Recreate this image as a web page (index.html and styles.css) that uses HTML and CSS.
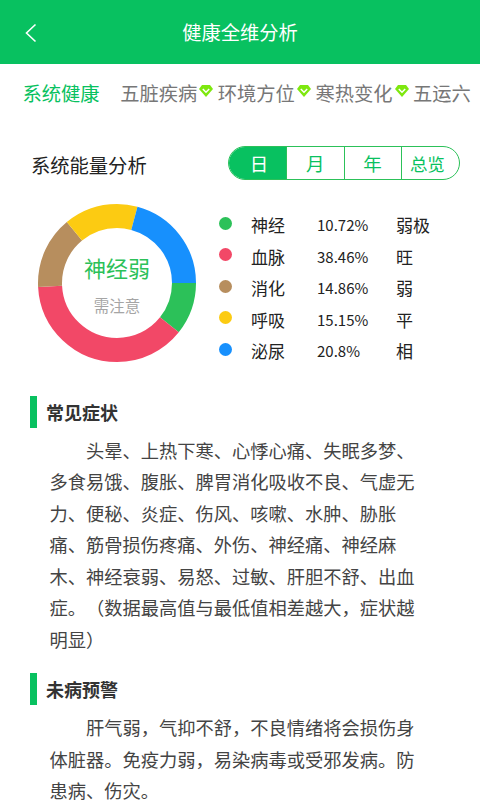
FILE: index.html
```html
<!DOCTYPE html>
<html lang="zh">
<head>
<meta charset="utf-8">
<title>健康全维分析</title>
<link rel="stylesheet" href="styles.css">
</head>
<body>
<header class="topbar">
  <svg class="back" width="14" height="20" viewBox="0 0 14 20"><path d="M11.5 1.5 L2.5 10 L11.5 18.5" fill="none" stroke="#fff" stroke-width="1.6"/></svg>
  <h1 class="title">健康全维分析</h1>
</header>
<nav class="tabs">
  <span class="tab active">系统健康</span>
  <span class="tab">五脏疾病</span>
  <svg class="gem" width="14" height="12" viewBox="0 0 14 12"><path d="M3 0 H11 L14 4 L7 12 L0 4 Z" fill="#7ee80f"/><path d="M3.8 4 L7 7.2 L10.2 4" fill="none" stroke="#fff" stroke-width="1.5"/></svg>
  <span class="tab">环境方位</span>
  <svg class="gem" width="14" height="12" viewBox="0 0 14 12"><path d="M3 0 H11 L14 4 L7 12 L0 4 Z" fill="#7ee80f"/><path d="M3.8 4 L7 7.2 L10.2 4" fill="none" stroke="#fff" stroke-width="1.5"/></svg>
  <span class="tab">寒热变化</span>
  <svg class="gem" width="14" height="12" viewBox="0 0 14 12"><path d="M3 0 H11 L14 4 L7 12 L0 4 Z" fill="#7ee80f"/><path d="M3.8 4 L7 7.2 L10.2 4" fill="none" stroke="#fff" stroke-width="1.5"/></svg>
  <span class="tab">五运六</span>
</nav>
<section class="energy-head">
  <h2 class="energy-title">系统能量分析</h2>
  <div class="segment">
    <span class="seg seg-on">日</span>
    <span class="seg">月</span>
    <span class="seg">年</span>
    <span class="seg seg-wide">总览</span>
  </div>
</section>
<section class="chart-row">
  <div class="donut">
    <svg width="160" height="160" viewBox="0 0 160 160">
      <g fill="none" stroke-width="24">
        <circle cx="80" cy="80" r="67" pathLength="100" stroke="#2cc159" stroke-dasharray="10.72 89.28" stroke-dashoffset="0"/>
        <circle cx="80" cy="80" r="67" pathLength="100" stroke="#f24867" stroke-dasharray="38.46 61.54" stroke-dashoffset="-10.72"/>
        <circle cx="80" cy="80" r="67" pathLength="100" stroke="#b78e5e" stroke-dasharray="14.86 85.14" stroke-dashoffset="-49.18"/>
        <circle cx="80" cy="80" r="67" pathLength="100" stroke="#fccb12" stroke-dasharray="15.15 84.85" stroke-dashoffset="-64.04"/>
        <circle cx="80" cy="80" r="67" pathLength="100" stroke="#1790fd" stroke-dasharray="20.81 79.19" stroke-dashoffset="-79.19"/>
      </g>
    </svg>
    <div class="donut-label">
      <div class="donut-main">神经弱</div>
      <div class="donut-sub">需注意</div>
    </div>
  </div>
  <ul class="legend">
    <li class="row"><i class="dot dot-green"></i><span class="name">神经</span><span class="pct">10.72%</span><span class="state">弱极</span></li>
    <li class="row"><i class="dot dot-red"></i><span class="name">血脉</span><span class="pct">38.46%</span><span class="state">旺</span></li>
    <li class="row"><i class="dot dot-brown"></i><span class="name">消化</span><span class="pct">14.86%</span><span class="state">弱</span></li>
    <li class="row"><i class="dot dot-yellow"></i><span class="name">呼吸</span><span class="pct">15.15%</span><span class="state">平</span></li>
    <li class="row"><i class="dot dot-blue"></i><span class="name">泌尿</span><span class="pct">20.8%</span><span class="state">相</span></li>
  </ul>
</section>
<section class="block block-first">
  <h3 class="block-title">常见症状</h3>
  <p class="block-text">头晕、上热下寒、心悸心痛、失眠多梦、多食易饿、腹胀、脾胃消化吸收不良、气虚无力、便秘、炎症、伤风、咳嗽、水肿、胁胀痛、筋骨损伤疼痛、外伤、神经痛、神经麻木、神经衰弱、易怒、过敏、肝胆不舒、出血症。（数据最高值与最低值相差越大，症状越明显）</p>
</section>
<section class="block block-second">
  <h3 class="block-title">未病预警</h3>
  <p class="block-text">肝气弱，气抑不舒，不良情绪将会损伤身体脏器。免疫力弱，易染病毒或受邪发病。防患病、伤灾。</p>
</section>
</body>
</html>
```
FILE: styles.css
```css
* { box-sizing: border-box; }
html, body { margin: 0; padding: 0; }
body {
  width: 480px;
  height: 800px;
  overflow: hidden;
  background: #fff;
  font-family: "Noto Sans CJK SC", "Noto Sans", sans-serif;
  color: #333;
}
.topbar {
  position: relative;
  height: 64px;
  background: #08c160;
  display: flex;
  align-items: center;
  justify-content: center;
}
.back { position: absolute; left: 24px; top: 23px; }
.title { margin: 0; font-size: 19.3px; font-weight: 400; color: #fff; line-height: 1; position: relative; top: 1px; }
.tabs {
  display: flex;
  align-items: center;
  height: 60px;
  padding-left: 22.5px;
  white-space: nowrap;
  overflow: hidden;
}
.tab { font-size: 19.3px; color: #777; flex: none; line-height: 1; }
.tab.active { color: #08c160; margin-right: 20.5px; }
.gem { flex: none; margin: -6px 4.5px 0 2px; }
.energy-head {
  display: flex;
  align-items: center;
  justify-content: space-between;
  padding: 22px 20px 0 31px;
}
.energy-title { margin: 0; font-size: 19.3px; font-weight: 400; color: #222; line-height: 1; position: relative; top: 3px; }
.segment {
  display: flex;
  width: 232px;
  height: 34px;
  border: 1.5px solid #2cc159;
  border-radius: 17px;
  overflow: hidden;
}
.seg {
  flex: none;
  width: 57.25px;
  display: flex;
  align-items: center;
  justify-content: center;
  font-size: 18.5px;
  color: #08c160;
  border-left: 1.5px solid #2cc159;
}
.seg:first-child { border-left: 0; padding-left: 3px; }
.seg-wide { font-size: 17.5px; padding-right: 5px; }
.seg-on { background: #08c160; color: #fff; }
.chart-row { display: flex; padding: 23px 0 0 37px; }
.donut { position: relative; width: 160px; height: 160px; flex: none; }
.donut-label {
  position: absolute;
  inset: 0;
  display: flex;
  flex-direction: column;
  align-items: center;
}
.donut-main { font-size: 22px; line-height: 1; color: #2cc159; margin-top: 53px; }
.donut-sub { font-size: 15.5px; line-height: 1; color: #a5a5a5; margin-top: 20px; }
.legend { list-style: none; margin: 0; padding: 6px 0 0 22px; }
.row { display: flex; align-items: center; height: 31.5px; color: #222; }
.dot { width: 13px; height: 13px; border-radius: 50%; flex: none; margin-top: -3px; }
.dot-green { background: #2cc159; }
.dot-red { background: #f24867; }
.dot-brown { background: #b78e5e; }
.dot-yellow { background: #fccb12; }
.dot-blue { background: #1790fd; }
.name { width: 66px; margin-left: 19px; font-size: 17px; }
.pct { width: 79px; font-size: 15px; }
.state { font-size: 17px; }
.block { padding-left: 30px; }
.block-first { margin-top: 29px; }
.block-second { margin-top: 18px; }
.block-title {
  margin: 0;
  height: 32px;
  border-left: 7px solid #08c160;
  padding-left: 9px;
  font-size: 18px;
  font-weight: 700;
  line-height: 32px;
  color: #333;
}
.block-text {
  margin: 7px 0 0 19.5px;
  width: 367px;
  font-size: 18.25px;
  line-height: 31.5px;
  text-indent: 2em;
  text-spacing-trim: space-all;
  color: #444;
}
```
